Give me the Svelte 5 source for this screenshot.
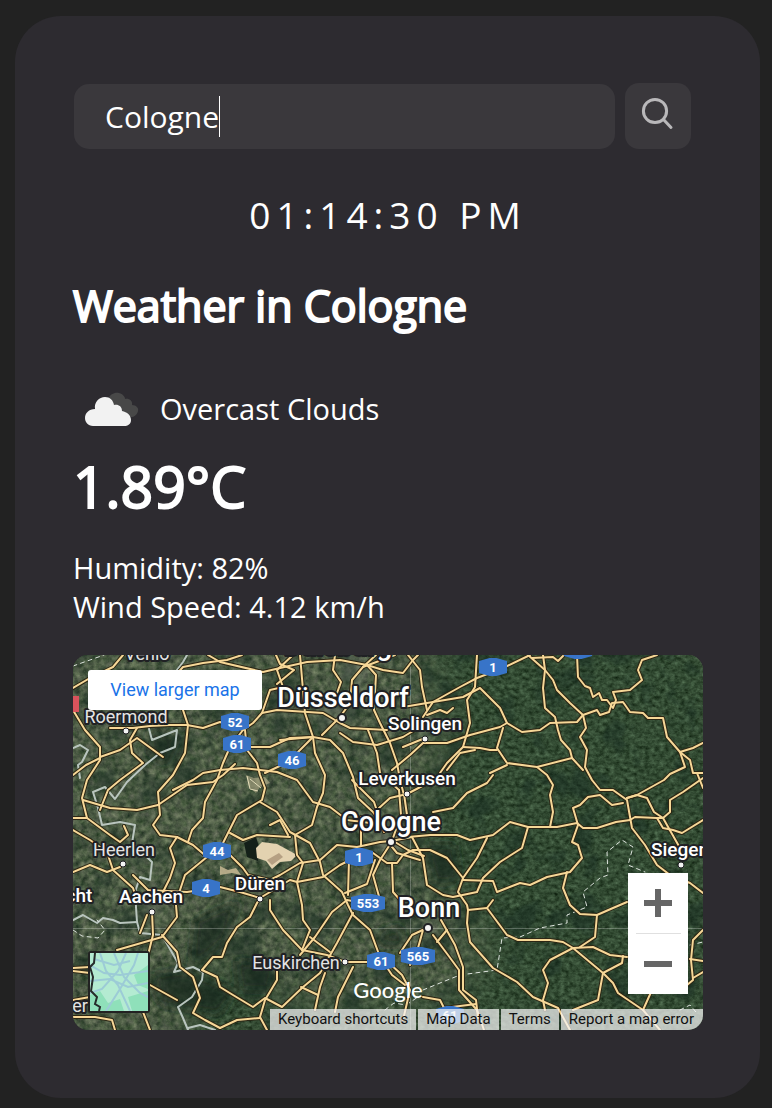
<script>
  import { onMount } from 'svelte';

  let city = $state('Cologne');
  let textWidth = $state(114);
  let field;

  // Width of the typed text, used to place the caret bar.
  function measure() {
    const style = getComputedStyle(field);
    const ctx = document.createElement('canvas').getContext('2d');
    ctx.font = `${style.fontWeight} ${style.fontSize} ${style.fontFamily}`;
    textWidth = Math.round(ctx.measureText(city).width);
  }
  onMount(measure);

  const roads = [
    '73,688 90,678 113,667 123,655', '73,710 85,730 100,747 100,760 87,780 82,798 87,818 110,835 120,842 128,835 124,826',
    '110,728 133,728 150,726 170,725 187,725 203,728 220,722 243,730', '167,685 183,667 203,663 227,660 242,655', '208,655 220,662 263,672 280,668 307,662 340,660 367,665 376,675 374,710 380,723 390,743 397,763 400,780 404,795',
    '183,710 188,725 185,753 173,775 158,792 160,815 153,825 160,835 177,837 193,845 207,857 185,875 180,890 176,905 177,917 162,937 117,950',
    '137,728 130,740 132,753 143,763 120,780 108,790 100,810', '163,757 137,738 120,750 100,757', '73,775 86,765 100,758',
    '293,655 277,670 283,687 270,690 262,713 253,723 243,730 230,747 223,763 217,780 205,802 203,818 192,830 188,842', '245,730 247,750 257,763 260,775 265,788 262,800 237,815 222,845 207,857', '250,747 270,747 290,738 313,737',
    '173,790 193,780 203,773 220,770 243,768 277,772 297,780 313,802 330,807 347,820 370,823', '262,713 277,710 323,713 340,723 350,728 387,730',
    '276,655 280,664 294,670 277,684', '300,655 303,690 305,713 313,737 315,753 325,775 323,793 317,807 312,825 295,835 297,855 303,863 297,882 302,905 303,920 310,930 302,950',
    '376,655 363,667 352,680 350,703 340,717 332,725 322,735', '335,655 333,670 341,682 337,693', '363,667 395,655', '367,665 383,670 403,673 413,660 418,655', '408,655 420,670 422,687 427,710',
    '477,655 475,687 467,700 470,723 463,747 447,763 440,773', '403,707 427,703 463,697 480,688 490,698 500,708 507,723 522,732 540,730 550,723 577,722 583,715 597,710 600,715 609,712 612,703 623,702 630,712 643,713 648,718 663,718 667,737 680,752 693,748 703,743',
    '423,717 433,702 460,687 477,678 503,668 530,655', '427,715 440,710 447,713 453,708', '280,740 313,737 330,740 343,753 353,777 358,798 373,812 382,825', '313,737 300,750 288,762 265,773',
    '340,733 353,742 377,745 403,737 418,728', '368,730 377,753 380,773 399,790', '392,770 410,755 423,743 447,743 470,735 500,727 507,723', '403,747 425,738', '463,747 480,748 490,750 497,750', '447,770 460,753 475,750',
    '503,728 497,748 507,763 537,767 572,758', '528,655 545,670 543,688 545,708 555,717 558,730 561,740 570,750 572,758 583,770', '543,655 545,670 553,680 557,690 570,703 583,715 586,728 580,737 587,750 585,767 592,780 600,790 613,790 627,800 632,828 645,845 657,865 670,875 690,883 703,893',
    '532,658 553,657 558,661 563,656', '577,655 578,677 585,686 590,688 593,697 599,693 602,700 607,700 613,708 616,700 613,692 630,690 642,680 638,670 642,660 657,655', '680,752 685,767 670,774 664,780 637,795 627,798', '680,752 690,760 693,773 703,773', '703,788 697,773', '490,773 507,765',
    '537,767 547,775 553,785 550,795 553,812 550,827', '83,800 110,808 137,810 158,805 187,785 213,782 223,775 235,764', '260,802 277,812 290,832 310,843 320,862 323,875 342,892 348,905 353,915 370,930 380,957 392,975 405,985', '230,833 243,840 257,835 290,837',
    '73,818 87,818', '73,830 90,840 107,852 113,870 133,888 137,900', '73,872 90,865 107,872 120,867', '177,837 170,848 175,863 170,878 163,892', '207,857 230,855 243,868 248,875 270,880 280,875 300,863 320,860 337,845 357,847 380,842 391,841', '133,875 148,890 187,892 220,887 240,892 260,898 290,880 297,882 323,877 340,865 350,860',
    '240,882 275,882', '270,825 280,820 288,835', '352,780 374,802 384,832', '379,808 390,798 407,794 430,782', '399,790 401,815 393,838', '404,794 407,815', '373,853 387,863 397,863 403,855 413,850 430,850 447,858 463,878 458,892 467,905 468,910 467,923 470,942 493,968 517,982 533,997 558,1008 570,1030', '392,863 393,892 402,902', '388,842 397,853 420,860',
    '391,841 412,837 423,858 427,885 443,895 453,897 477,892 483,878 500,862 522,848 528,827', '395,842 408,850 424,856', '408,837 430,835 457,835 470,840 493,835 510,822 528,827 557,827 577,823 583,828 597,828 616,822 630,820 635,817 657,818', '433,812 453,808 467,793 487,783 493,775', '463,878 477,858 487,838',
    '463,880 493,881 497,892 520,883 530,885 547,877 570,872 582,858 578,845 572,842 578,825 573,808 580,805 588,797 600,795 612,805 623,803', '361,817 361,846', '391,843 380,860 373,875 380,900', '375,860 367,884 345,893', '348,895 349,860',
    '627,798 637,795 647,798 654,812 663,818 680,848', '703,778 683,792 670,800 670,812 663,818 657,818 663,828 673,830 682,833 703,820', '567,872 563,888 570,905 580,914 597,915 613,908 627,902', '597,915 595,937 580,947',
    '152,912 153,935 148,955', '147,915 140,933', '162,935 177,952 180,967 193,977 200,998 193,1013 205,1020 220,1028', '260,898 257,903 250,917 237,927 227,943 222,957 213,957 202,970 217,977 220,987 233,995 253,1007 265,998 282,1007 303,987 320,973 337,943 353,913',
    '270,900 270,910 283,930 302,950 327,955 345,962 380,962', '300,955 315,937 332,912 347,900 363,903', '310,937 330,952', '277,967 277,980 265,1000 260,1017 267,1030', '325,973 320,987 315,1010', '301,987 318,995', '150,985 177,1000', '220,1028 237,1020 260,1018', '353,967 338,997 335,1012', '73,968 90,967', '73,971 90,973', '73,1000 90,997', '73,1017 95,1017 112,1020 115,1030', '143,1012 150,1030',
    '400,953 412,935 427,928', '423,930 418,948 410,965', '433,935 448,955 459,970 459,990 477,1010 484,1030', '441,920 455,945 463,967 463,990 476,1000 478,1018', '437,942 447,930', '468,910 487,908 507,935 518,940 550,940 563,942 573,948 550,960 543,970 548,983 543,1000 545,1010', '487,908 493,900',
    '573,948 593,947 610,955 627,957', '573,948 603,973 613,983 618,993 643,1010 660,1030', '603,973 598,1000 573,1010', '603,973 622,963 623,956', '388,962 402,975 410,990 403,1020', '423,997 440,1000 444,1008 476,1004', '703,930 693,940 691,960 693,980 687,985', '690,959 703,961', '693,978 703,972', '652,990 643,1010'
  ];

  const borders = [
    '187,655 183,662 177,670 180,676', '148,725 152,740 177,730 175,747 160,753 145,765 127,782 115,799 105,787 93,792 98,808 102,825 120,822 135,825 132,843 152,862 150,880 140,877 135,892 137,922 140,933 162,935 178,963 174,972 193,967 203,972 202,980 192,997 178,1007 183,1018 188,1030',
    '73,748 80,745 88,750 82,762 78,765 80,778', '73,920 83,915 97,923 103,918 113,920 120,923 137,922', '188,1028 200,1025 215,1030'
  ];

  const dashed = [
    '423,990 440,983 460,975 497,970 502,938 520,937 540,928 567,923 567,915 587,907 583,892 600,878 608,875 607,852 622,840 633,847 628,865 645,872',
    '73,666 90,660 104,655', '73,930 82,936 98,938 105,930 97,920', '690,945 703,942', '385,1010 394,1003 406,1005 418,997', '680,1010 690,1005 696,1012'
  ];

  const towns = [
    { name: 'Düsseldorf', x: 343, y: 707, size: 27, dot: [342, 718], big: true },
    { name: 'Cologne', x: 391, y: 831, size: 27, dot: [391, 842], big: true },
    { name: 'Bonn', x: 429, y: 917, size: 27, dot: [428, 928], big: true },
    { name: 'Solingen', x: 425, y: 730, size: 19, dot: [425, 739] },
    { name: 'Leverkusen', x: 407, y: 785, size: 19, dot: [407, 794] },
    { name: 'Roermond', x: 126, y: 723, size: 18, dot: [126, 731], light: true },
    { name: 'Heerlen', x: 124, y: 856, size: 18, dot: [123, 864], light: true },
    { name: 'Aachen', x: 151, y: 903, size: 19, dot: [152, 912] },
    { name: 'Düren', x: 260, y: 890, size: 19, dot: [260, 899] },
    { name: 'Euskirchen', x: 296, y: 969, size: 18, dot: [345, 962], light: true },
    { name: 'Siegen', x: 680, y: 856, size: 19, dot: [681, 865] },
    { name: 'Venlo', x: 147, y: 660, size: 18, light: true },
    { name: 'Duisburg', x: 338, y: 655, size: 27, big: true },
    { name: 'cht', x: 79, y: 902, size: 19 },
    { name: 'er', x: 80, y: 1012, size: 18, light: true }
  ];

  const shields = [
    ['52', 235, 722, 28], ['61', 237, 744, 28], ['46', 292, 760, 28], ['44', 217, 851, 28], ['4', 206, 888, 28],
    ['1', 359, 857, 28], ['553', 368, 903, 34], ['61', 381, 961, 28], ['565', 418, 956, 34], ['1', 493, 667, 28],
    ['', 578, 650, 28], ['61', 450, 1015, 28]
  ];

  const hex = (x, y, w) => {
    const h = w / 2;
    const t = w / 8;
    return `${x - h},${y - 6} ${x - t},${y - 9} ${x + t},${y - 9} ${x + h},${y - 6} ${x + h},${y + 6} ${x + t},${y + 9} ${x - t},${y + 9} ${x - h},${y + 6}`;
  };
</script>

<main class="card">
  <form class="search" onsubmit={(e) => e.preventDefault()}>
    <div class="field">
      <input bind:this={field} bind:value={city} oninput={measure} type="text" aria-label="City" autocomplete="off" spellcheck="false" />
      <span class="caret" style="left: {31 + textWidth}px"></span>
    </div>
    <button class="go" type="submit" aria-label="Search">
      <svg viewBox="0 0 34 34" width="34" height="34">
        <circle cx="14" cy="14" r="11.6" />
        <path d="M22.5 22.5 L30 30.5" />
      </svg>
    </button>
  </form>

  <time class="clock">01:14:30 PM</time>
  <h1>Weather in Cologne</h1>

  <div class="conditions">
    <svg class="cloud" viewBox="0 0 54 34" width="54" height="34" aria-hidden="true">
      <path fill="#484848" d="M23 7 C25 2 30 0 34 1 C38 2 40 5 40 7 C44 6 48 9 47 13 C51 13 54 16 53 19 C52 23 49 25 46 25 L30 20 Z" />
      <path fill="#f2f2f2" d="M8 34 C3 34 0 30 0 26 C0 21 4 17 10 17 C9 10 14 5 20 5 C25 5 28 8 29 13 C33 12 37 14 37 19 C42 20 46 23 46 28 C46 32 43 34 39 34 Z" />
    </svg>
    <span>Overcast Clouds</span>
  </div>

  <p class="temp">1.89°C</p>
  <p class="detail">Humidity: 82%</p>
  <p class="detail">Wind Speed: 4.12 km/h</p>

  <section class="map" aria-label="Map">
    <svg class="canvas" viewBox="73 655 630 375" preserveAspectRatio="xMidYMid slice">
      <defs>
        <filter id="ground" x="0" y="0" width="100%" height="100%" color-interpolation-filters="sRGB">
          <feTurbulence type="fractalNoise" baseFrequency="0.16" numOctaves="4" seed="8" />
          <feColorMatrix values="0.4 0.15 0 0 0.02  0.35 0.2 0 0 0.08  0.33 0.1 0 0 0.05  0 0 0 0 1" />
        </filter>
        <filter id="wood" x="0" y="0" width="100%" height="100%" color-interpolation-filters="sRGB">
          <feTurbulence type="fractalNoise" baseFrequency="0.2 0.26" numOctaves="4" seed="31" />
          <feColorMatrix values="0.3 0.1 0 0 0.0  0.35 0.12 0 0 0.06  0.3 0.1 0 0 0.0  0 0 0 0 1" />
        </filter>
        <filter id="patches" x="0" y="0" width="100%" height="100%" color-interpolation-filters="sRGB">
          <feTurbulence type="fractalNoise" baseFrequency="0.03" numOctaves="4" seed="5" />
          <feColorMatrix values="0 0 0 0 0.09  0 0 0 0 0.17  0 0 0 0 0.13  5 0 0 0 -2.6" />
        </filter>
        <filter id="soft" x="-20%" y="-20%" width="140%" height="140%"><feGaussianBlur stdDeviation="18" /></filter>
        <filter id="haze" x="-40%" y="-40%" width="180%" height="180%"><feGaussianBlur stdDeviation="6" /></filter>
        <mask id="east">
          <polygon points="420,630 730,630 730,1050 190,1050 200,960 300,1010 460,1000 490,940 440,880 420,820 450,740" fill="#fff" filter="url(#soft)" />
        </mask>
      </defs>
      <rect x="73" y="655" width="630" height="375" filter="url(#ground)" />
      <g mask="url(#east)"><rect x="73" y="655" width="630" height="375" filter="url(#wood)" /></g>
      <rect x="73" y="655" width="630" height="375" filter="url(#patches)" opacity="0.5" />
      <g filter="url(#haze)" fill="#15281f" opacity="0.7">
        <path d="M195 920 L240 900 L225 940 L190 970 Z" />
        <path d="M150 975 L185 970 L235 990 L220 1015 L160 1005 Z" />
        <path d="M235 960 L275 965 L270 990 L240 990 Z" />
        <path d="M425 845 L455 845 L460 880 L435 885 Z" />
        <path d="M148 730 L180 735 L165 765 L150 755 Z" />
        <path d="M375 935 L400 925 L405 945 L380 945 Z" />
      </g>
      <g filter="url(#haze)" fill="#8c8d83" opacity="0.3">
        <circle cx="390" cy="838" r="16" /><circle cx="335" cy="713" r="16" /><circle cx="355" cy="670" r="14" /><circle cx="429" cy="928" r="9" /><circle cx="425" cy="725" r="11" /><circle cx="153" cy="909" r="10" />
      </g>
      <path fill="#142019" d="M244 843 L256 837 L260 850 L258 861 L247 857 Z" />
      <path fill="#e3d2b0" d="M256 848 L262 842 L277 844 L288 850 L297 855 L291 861 L280 862 L272 869 L266 861 L257 858 Z" />
      <path fill="#b5a083" d="M267 860 L279 853 L283 857 L272 865 Z" />
      <path fill="#c8b993" opacity="0.85" d="M220 866 L228 870 L236 868 L241 875 L232 873 L220 875 Z" />
      <path fill="#b9b08c" opacity="0.6" d="M246 775 L254 778 L265 777 L270 783 L260 787 L256 793 L249 787 Z" />
      <path fill="none" stroke="#e3dcb9" d="M247 776 L250 789 L258 791 M250 779 L261 788" />
      <path stroke="#ffffff" stroke-opacity="0.25" d="M410.5 655 V1030 M73 928.5 H703" />

      <g class="border">{#each borders as points}<polyline {points} />{/each}</g>
      <g class="dashed">{#each dashed as points}<polyline {points} />{/each}</g>
      <g class="casing">{#each roads as points}<polyline {points} />{/each}</g>
      <g class="road">{#each roads as points}<polyline {points} />{/each}</g>

      <rect x="62" y="696" width="17" height="16" fill="#d8535c" />
      {#each shields as [label, x, y, w]}
        <polygon points={hex(x, y, w)} fill="#3874c8" />
        {#if label}<text class="shield" {x} y={y + 5}>{label}</text>{/if}
      {/each}
      {#each towns as town}
        {#if town.dot}
          <circle cx={town.dot[0]} cy={town.dot[1]} r={town.big ? 4 : 3} fill="#f4f4f4" stroke="#202124" stroke-width={town.big ? 2 : 1} />
        {/if}
        <text class="town" class:light={town.light} x={town.x} y={town.y} font-size={town.size}>{town.name}</text>
      {/each}
    </svg>

    <a class="larger" href="#map">View larger map</a>

    <button class="layer" type="button" aria-label="Map type">
      <svg viewBox="0 0 58 58">
        <rect width="58" height="58" fill="#b4ebd2" />
        <path fill="#8fe0ba" d="M0 42 L10 38 L18 50 L30 46 L34 58 H0 Z M44 22 L58 12 V36 L48 32 Z M38 44 L58 38 V58 H42 Z" />
        <path fill="none" stroke="#9ccbd6" stroke-width="2" d="M0 12 L14 20 L30 22 L58 18 M10 0 L16 18 L28 32 L40 58 M36 0 L28 18 L12 36 L0 40 M24 0 L34 24 L50 40 L58 44 M0 28 L20 26 L38 34 L58 30 M16 58 L30 36 L44 12 L48 0 M4 6 L24 12 L40 8" />
        <path fill="none" stroke="#262b2a" stroke-width="2" d="M5 0 L4 10 L0 14 L3 24 L1 38 L7 44 L5 51 L10 54 L9 58" />
      </svg>
    </button>

    <span class="brand">Google</span>

    <div class="zoom">
      <button type="button" aria-label="Zoom in">
        <svg viewBox="0 0 28 28" width="28" height="28"><path d="M11 0 H17 V11 H28 V17 H17 V28 H11 V17 H0 V11 H11 Z" /></svg>
      </button>
      <button type="button" aria-label="Zoom out">
        <svg viewBox="0 0 28 28" width="28" height="28"><path d="M0 11 H28 V17 H0 Z" /></svg>
      </button>
    </div>

    <footer class="legal">
      <button type="button">Keyboard shortcuts</button>
      <button type="button">Map Data</button>
      <a href="#terms">Terms</a>
      <a href="#report">Report a map error</a>
    </footer>
  </section>
</main>

<style>
  :global(body) { background: #222222; }
  .card {
    margin: 16px 12px 10px 15px;
    padding: 67px 57px 68px 58px;
    box-sizing: border-box;
    border-radius: 46px;
    background: #2d2b30;
    color: #fff;
    font-family: "Open Sans", "Noto Sans", sans-serif;
    font-size: 29px;
    display: flex;
    flex-direction: column;
  }
  .search { display: flex; align-items: flex-end; gap: 10px; margin: 0 12px 0 1px; }
  .field { position: relative; flex: 1; min-width: 0; display: flex; }
  input {
    width: 100%; height: 65px; box-sizing: border-box; padding: 0 31px; border: 0; border-radius: 15px;
    background: #3a383c; color: #fff; font: inherit; font-size: 30px; outline: none; caret-color: transparent;
  }
  .caret { position: absolute; top: 12px; width: 1px; height: 41px; background: #fff; }
  .go {
    width: 66px; height: 66px; padding: 0 0 4px; border: 0; border-radius: 14px; background: #3a383c;
    display: flex; align-items: center; justify-content: center;
  }
  .go svg { fill: none; stroke: #b9b8ba; stroke-width: 3; stroke-linecap: round; }
  .clock { margin-top: 39px; font-size: 37px; line-height: 54px; letter-spacing: 6px; text-align: center; }
  h1 { margin: 34px 0 0; font-size: 43px; line-height: 60px; font-weight: 400; -webkit-text-stroke: 2px #fff; }
  .conditions { display: flex; align-items: center; gap: 21px; margin: 53px 0 0 12px; line-height: 40px; }
  .cloud { flex: none; }
  p { margin: 0; }
  .temp { margin: 21px 0 26px; font-size: 57px; line-height: 72px; -webkit-text-stroke: 2px #fff; }
  .detail { line-height: 39px; }
  .map { position: relative; margin-top: 29px; border-radius: 15px; overflow: hidden; background: #2c3c2c; font-family: Roboto, sans-serif; }
  .canvas { display: block; width: 100%; height: auto; }
  .casing, .road, .border, .dashed { fill: none; stroke-linejoin: round; stroke-linecap: round; }
  .casing { stroke: #2c2614; stroke-width: 4; }
  .road { stroke: #f6d797; stroke-width: 2; }
  .border { stroke: #b9c5be; stroke-width: 2; }
  .dashed { stroke: #dfe5df; stroke-width: 1; stroke-dasharray: 4 4; }
  .town { fill: #fff; stroke: #202124; stroke-width: 4; stroke-linejoin: round; paint-order: stroke; text-anchor: middle; font-weight: 500; }
  .light { fill: #e4e4e4; font-weight: 400; }
  .shield { fill: #fff; font-size: 13px; font-weight: 700; text-anchor: middle; }
  .larger {
    position: absolute; left: 15px; top: 15px; width: 174px; height: 40px; border-radius: 3px; background: #fff;
    color: #1a73e8; font-size: 18px; line-height: 40px; text-align: center; text-decoration: none;
  }
  .layer { position: absolute; left: 15px; bottom: 17px; width: 62px; height: 62px; padding: 0; border: 2px solid #222; border-radius: 3px; overflow: hidden; }
  .layer svg { display: block; width: 100%; height: 100%; }
  .brand { position: absolute; left: 50%; bottom: 25px; transform: translateX(-50%); font: 500 22px/30px Lato, sans-serif; color: #fff; }
  .zoom { position: absolute; right: 15px; bottom: 36px; width: 60px; background: #fff; }
  .zoom button { width: 100%; height: 60px; padding: 0; border: 0; background: none; display: flex; align-items: center; justify-content: center; }
  .zoom button + button { position: relative; height: 61px; }
  .zoom button + button::before { content: ""; position: absolute; top: 0; left: 8px; right: 7px; height: 1px; background: #e0e0e0; }
  .zoom svg { fill: #666; }
  .legal { position: absolute; right: 0; bottom: 0; display: flex; gap: 2px; }
  .legal > * {
    padding: 0 8px; border: 0; background: rgba(245, 245, 245, 0.72); color: #111;
    font: 15px/21px Roboto, sans-serif; text-decoration: none; white-space: nowrap;
  }
  .legal > :last-child { padding-right: 9px; }
</style>
